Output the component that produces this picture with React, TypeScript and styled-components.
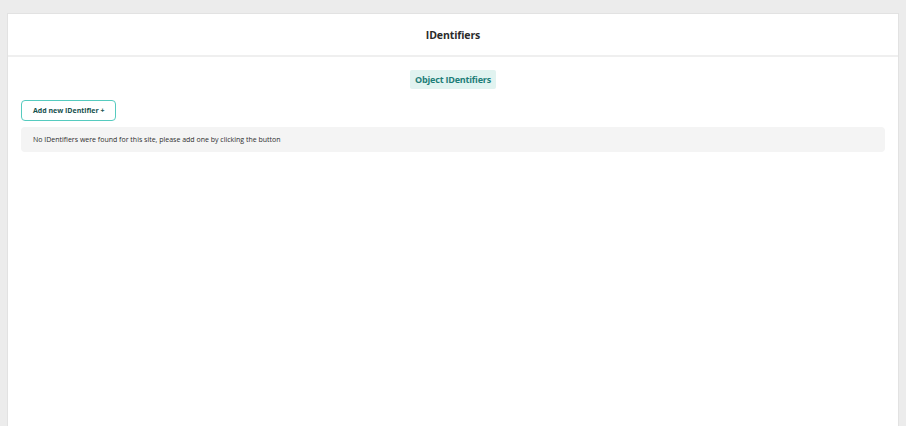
import React from 'react'
import styled, { createGlobalStyle } from 'styled-components'

const GlobalStyle = createGlobalStyle`
  html, body {
    margin: 0;
    height: 100%;
    background: #ececec;
    font-family: 'Open Sans', 'Noto Sans', sans-serif;
  }
  #root {
    height: 100%;
  }
`

const Page = styled.div`
  box-sizing: border-box;
  height: 100%;
  padding: 13px 7px 0 7px;
  display: flex;
`

const Card = styled.div`
  flex: 1;
  background: #fff;
  border: 1px solid #e2e2e2;
  border-bottom: none;
  display: flex;
  flex-direction: column;
`

const Header = styled.div`
  height: 41px;
  display: flex;
  align-items: center;
  justify-content: center;
  border-bottom: 2px solid #efefef;
  font-size: 10.5px;
  font-weight: 700;
  color: #2b2b2b;
  letter-spacing: -0.1px;
`

const Body = styled.div`
  padding: 13px 13px 0 13px;
  display: flex;
  flex-direction: column;
`

const Badge = styled.div`
  align-self: center;
  background: #e1f3f0;
  color: #1d7d78;
  font-size: 9px;
  font-weight: 700;
  letter-spacing: -0.2px;
  padding: 0 5px;
  height: 19px;
  line-height: 19px;
  border-radius: 2px;
`

const AddButton = styled.button`
  align-self: flex-start;
  margin-top: 11px;
  height: 21px;
  padding: 0 11px;
  background: #fff;
  border: 1px solid #56cbbf;
  border-radius: 4px;
  font-family: inherit;
  font-size: 7px;
  font-weight: 700;
  color: #17514e;
  cursor: pointer;
`

const Empty = styled.div`
  margin-top: 6px;
  height: 25px;
  display: flex;
  align-items: center;
  padding: 0 12px;
  background: #f4f4f4;
  border-radius: 4px;
  font-size: 7px;
  color: #2f2f2f;
`

const App: React.FC = () => (
  <>
    <GlobalStyle />
    <Page>
      <Card>
        <Header>IDentifiers</Header>
        <Body>
          <Badge>Object IDentifiers</Badge>
          <AddButton>Add new IDentifier +</AddButton>
          <Empty>No IDentifiers were found for this site, please add one by clicking the button</Empty>
        </Body>
      </Card>
    </Page>
  </>
)

export default App
